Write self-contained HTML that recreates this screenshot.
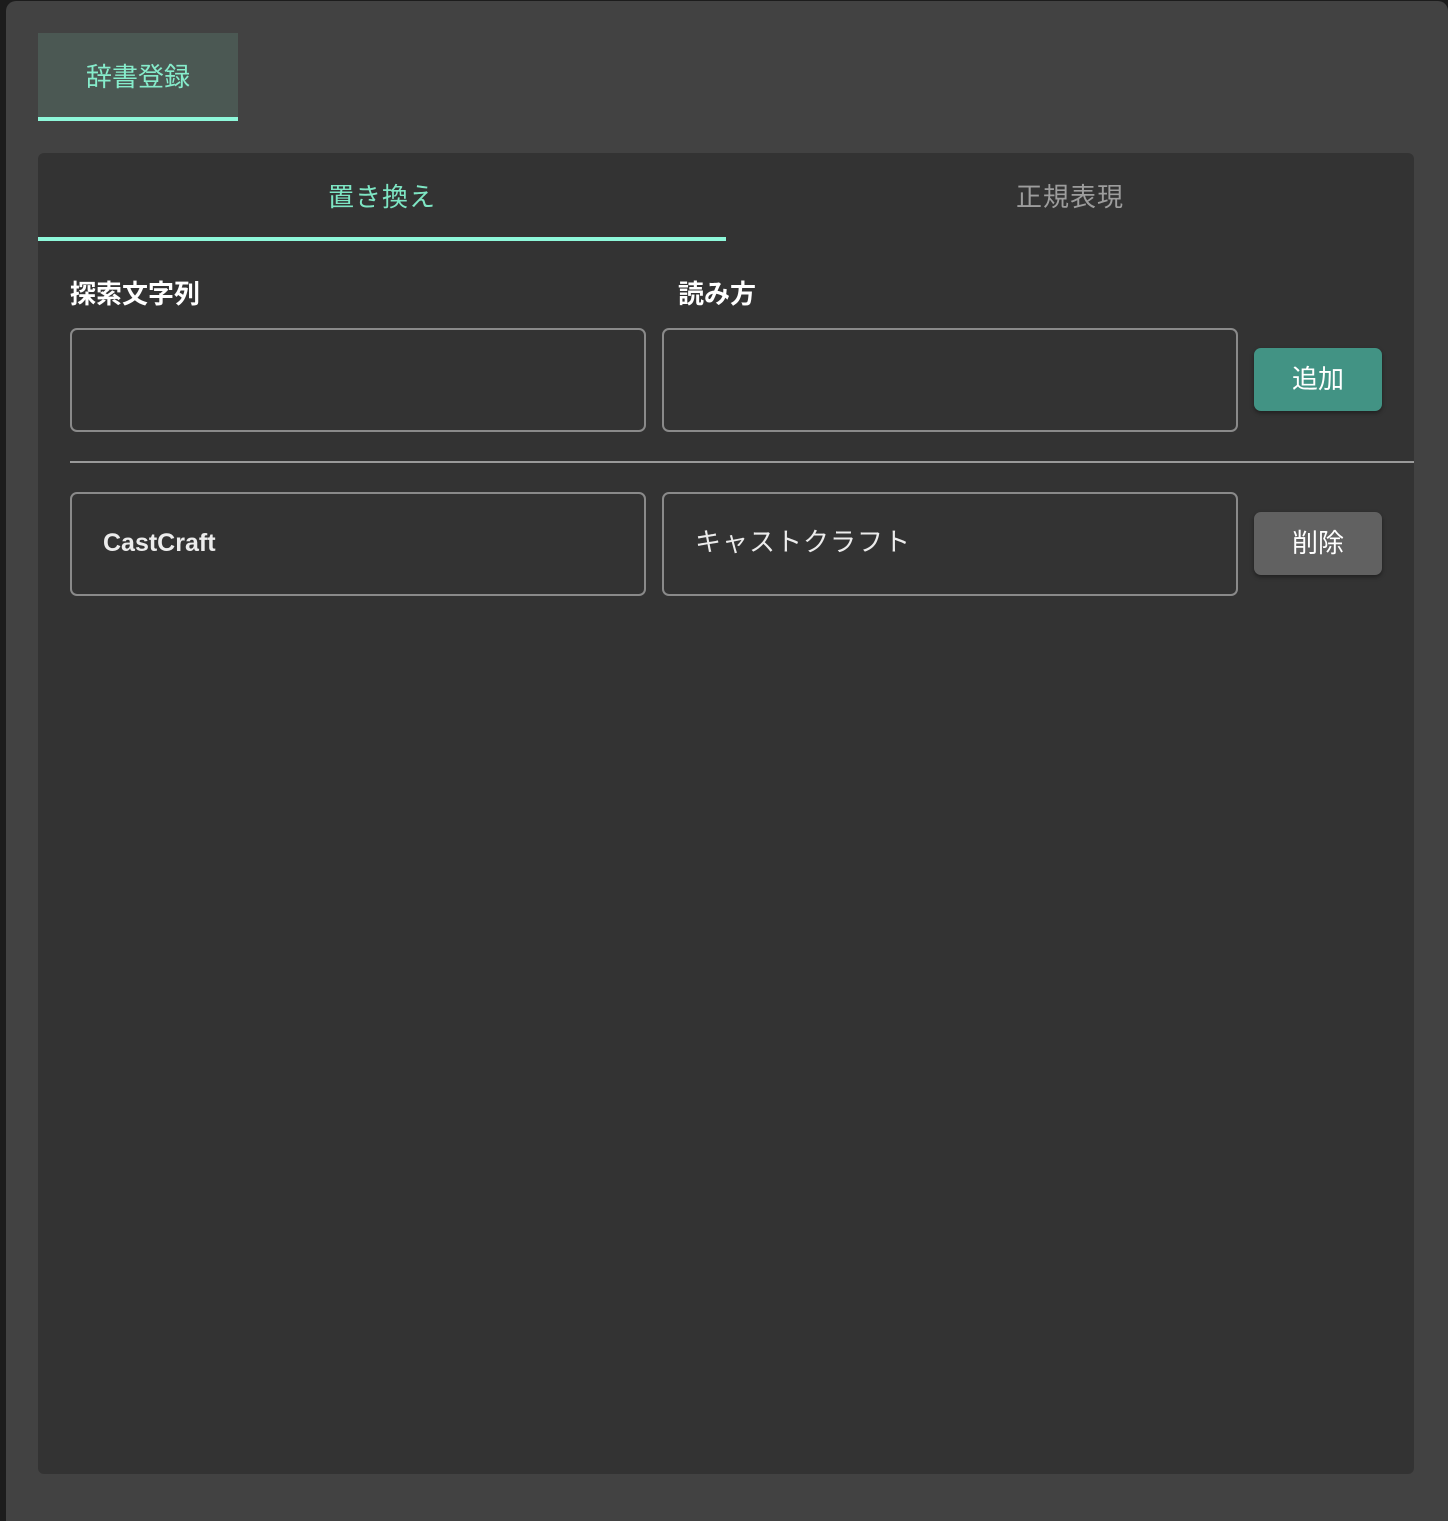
<!DOCTYPE html>
<html><head><meta charset="utf-8"><style>
body{margin:0;width:1448px;height:1510px;background:#1c1c1c;position:relative;overflow:hidden;font-family:"Liberation Sans","Noto Sans CJK JP",sans-serif}
.a{position:absolute}
.panel{left:6px;top:1px;width:1442px;height:1520px;background:#424242;border-radius:10px 10px 0 0}
.tab{left:38px;top:33px;width:200px;height:84px;background:#4b5853;color:#86eccb;font-size:26px;text-align:center;line-height:88px;border-bottom:4px solid #8ef8da}
.card{left:38px;top:153px;width:1376px;height:1321px;background:#333;border-radius:6px}
.t{top:153px;height:84px;line-height:88px;font-size:26px;text-align:center;letter-spacing:1px}
.lbl{top:274px;font-size:26px;color:#fff;font-weight:bold}
.inp{width:573px;height:101px;border:2px solid #8a8a8a;border-radius:7px;box-sizing:border-box;color:#ececec;font-size:26px;line-height:97px;padding-left:31px}
.btn{left:1254px;width:128px;height:63px;border-radius:7px;color:#fff;font-size:26px;text-align:center;line-height:63px;box-shadow:0 2px 4px rgba(0,0,0,.4)}
</style></head><body>
<div class="a panel"></div>
<div class="a tab">辞書登録</div>
<div class="a card"></div>
<div class="a t" style="left:38px;width:688px;color:#7ee6c4">置き換え</div>
<div class="a" style="left:38px;top:237px;width:688px;height:4px;background:#8ef8da"></div>
<div class="a t" style="left:726px;width:688px;color:#9d9d9d">正規表現</div>
<div class="a lbl" style="left:70px">探索文字列</div>
<div class="a lbl" style="left:678px">読み方</div>
<div class="a inp" style="left:70px;top:328px;width:576px;height:104px"></div>
<div class="a inp" style="left:662px;top:328px;width:576px;height:104px"></div>
<div class="a btn" style="top:348px;background:#429384">追加</div>
<div class="a" style="left:70px;top:461px;width:1344px;height:2px;background:#9a9a9a"></div>
<div class="a inp" style="left:70px;top:492px;width:576px;height:104px;font-weight:bold;font-size:25px;line-height:98px">CastCraft</div>
<div class="a inp" style="left:662px;top:492px;width:576px;height:104px;line-height:96px;letter-spacing:1px">キャストクラフト</div>
<div class="a btn" style="top:512px;background:#616161">削除</div>
</body></html>
